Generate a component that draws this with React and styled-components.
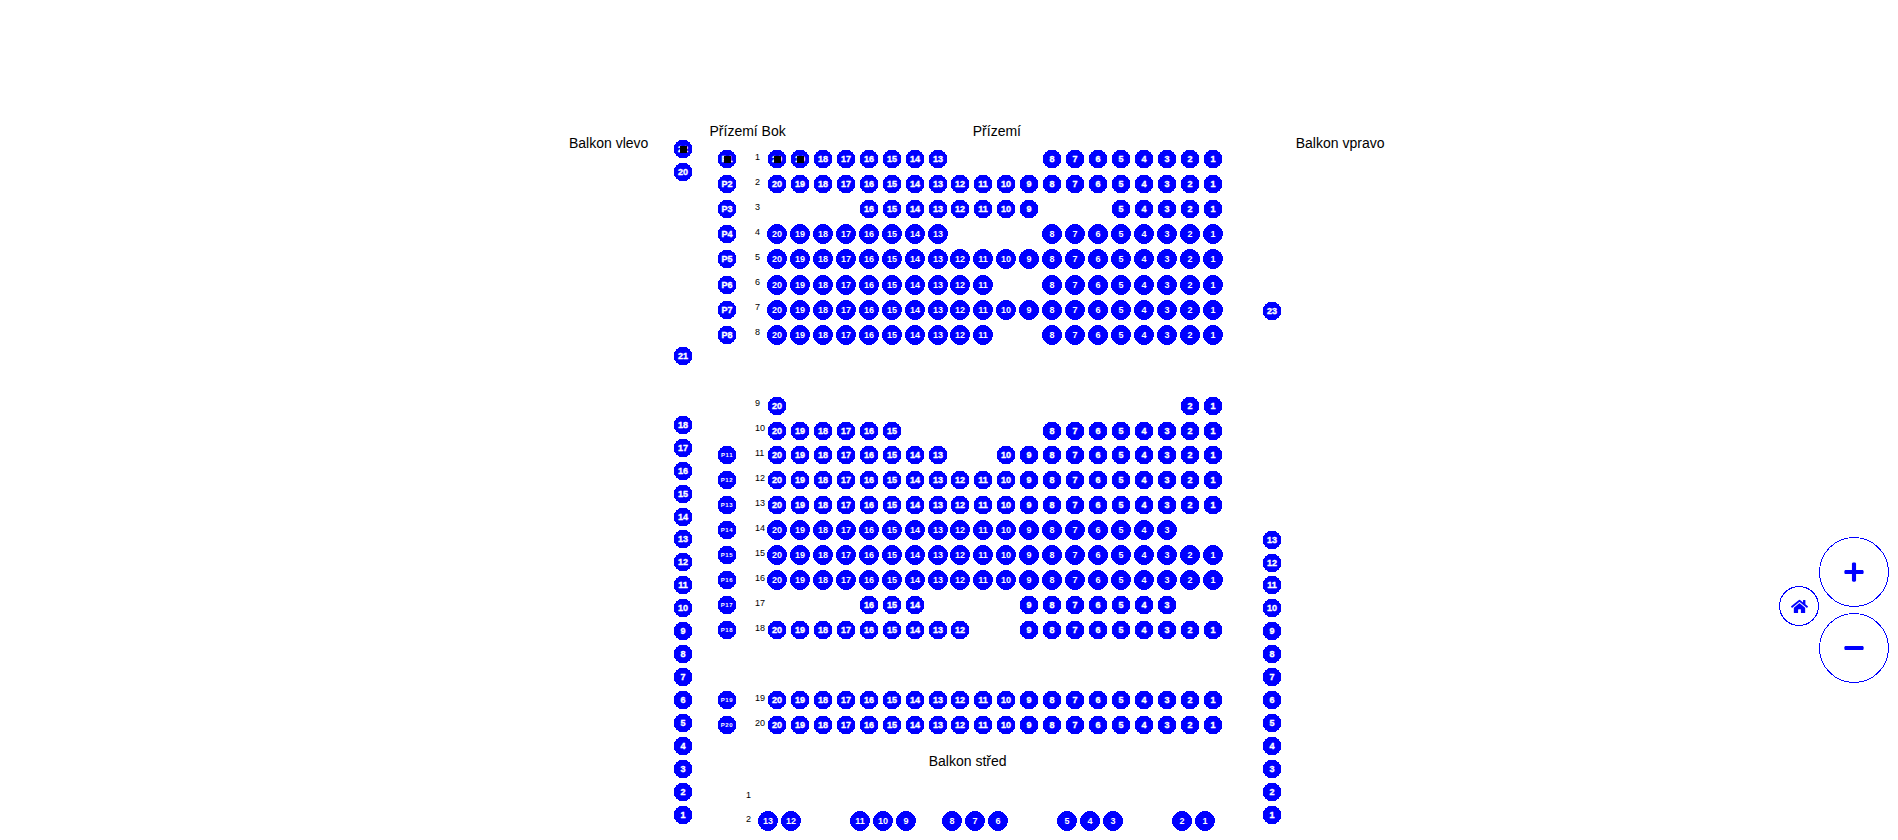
import React from 'react';
import styled, { createGlobalStyle } from 'styled-components';
import { FaHome, FaMinus, FaPlus } from 'react-icons/fa';

const BLUE = '#0000ff';

// seat ranges per row, always counted down from 20 to 1
const STALLS_TOP = [
  { row: 1, side: 'P1', ranges: [[20, 13], [8, 1]] },
  { row: 2, side: 'P2', ranges: [[20, 1]] },
  { row: 3, side: 'P3', ranges: [[16, 9], [5, 1]] },
  { row: 4, side: 'P4', ranges: [[20, 13], [8, 1]], large: true },
  { row: 5, side: 'P5', ranges: [[20, 1]], large: true },
  { row: 6, side: 'P6', ranges: [[20, 11], [8, 1]], large: true },
  { row: 7, side: 'P7', ranges: [[20, 1]], large: true },
  { row: 8, side: 'P8', ranges: [[20, 11], [8, 1]], large: true },
];

const STALLS_MIDDLE = [
  { row: 9, ranges: [[20, 20], [2, 1]] },
  { row: 10, ranges: [[20, 15], [8, 1]] },
  { row: 11, side: 'P11', ranges: [[20, 13], [10, 1]] },
  { row: 12, side: 'P12', ranges: [[20, 1]] },
  { row: 13, side: 'P13', ranges: [[20, 1]] },
  { row: 14, side: 'P14', ranges: [[20, 3]], large: true },
  { row: 15, side: 'P15', ranges: [[20, 1]], large: true },
  { row: 16, side: 'P16', ranges: [[20, 1]], large: true },
  { row: 17, side: 'P17', ranges: [[16, 14], [9, 3]] },
  { row: 18, side: 'P18', ranges: [[20, 12], [9, 1]] },
];

const STALLS_BOTTOM = [
  { row: 19, side: 'P19', ranges: [[20, 1]] },
  { row: 20, side: 'P20', ranges: [[20, 1]] },
];

const BALCONY_CENTER = [13, 12, null, null, 11, 10, 9, null, 8, 7, 6, null, null, 5, 4, 3, null, null, 2, 1];

const countDown = (from, to) => {
  const out = [];
  for (let i = from; i >= to; i--) out.push(i);
  return out;
};

const hasSeat = (ranges, n) => ranges.some(([from, to]) => n <= from && n >= to);

const GlobalStyle = createGlobalStyle`
  html, body {
    margin: 0;
    background: #fff;
    font-family: "Liberation Sans", Arial, sans-serif;
  }
`;

const Seat = ({ label, large, tiny, marked }) => (
  <SeatIcon viewBox="0 0 22 22">
    <SeatDisc cx="11" cy="11" r={large ? 10 : 9.4} />
    <SeatLabel x="11" y="11.4" $large={large} $tiny={tiny}>{label}</SeatLabel>
    {marked && <SeatMark x="7.5" y="7.5" width="7" height="7" />}
  </SeatIcon>
);

const SeatRow = ({ row, side, ranges, large, height, markedSeats = [] }) => (
  <Row $height={height}>
    <SideSlot>
      {side && <Seat label={side} tiny={side.length > 2} marked={side === 'P1'} />}
    </SideSlot>
    <RowNumber>{row}</RowNumber>
    {countDown(20, 1).map((n) => (
      <SeatSlot key={n}>
        {hasSeat(ranges, n) && <Seat label={n} large={large} marked={markedSeats.includes(n)} />}
      </SeatSlot>
    ))}
  </Row>
);

const ZoomButton = ({ size, children }) => (
  <RoundButton $size={size}>
    <Ring viewBox={`0 0 ${size} ${size}`}>
      <RingLine cx={size / 2} cy={size / 2} r={size / 2 - 0.5} />
    </Ring>
    {children}
  </RoundButton>
);

const App = () => (
  <>
    <GlobalStyle />
    <Page>
      <SeatMap>
        <LeftTitle>Balkon vlevo</LeftTitle>

        <LeftBalcony>
          <BalconySlot><Seat label={22} marked /></BalconySlot>
          <BalconySlot><Seat label={20} /></BalconySlot>
          <BalconySlot $gap={161}><Seat label={21} /></BalconySlot>
          <BalconySlot $gap={46}><Seat label={18} /></BalconySlot>
          {countDown(17, 1).map((n) => (
            <BalconySlot key={n}><Seat label={n} /></BalconySlot>
          ))}
        </LeftBalcony>

        <Stalls>
          <StallsTitles>
            <SideTitle>Přízemí Bok</SideTitle>
            <MainTitle>Přízemí</MainTitle>
          </StallsTitles>

          {STALLS_TOP.map((r) => (
            <SeatRow key={r.row} {...r} height={25.1} markedSeats={r.row === 1 ? [20, 19] : []} />
          ))}
          <RowBlock $gap={45.9}>
            {STALLS_MIDDLE.map((r) => <SeatRow key={r.row} {...r} height={24.92} />)}
          </RowBlock>
          <RowBlock $gap={45.1}>
            {STALLS_BOTTOM.map((r) => <SeatRow key={r.row} {...r} height={25} />)}
          </RowBlock>

          <CenterTitle>Balkon střed</CenterTitle>
          <CenterRow $height={23}>
            <CenterNumber>1</CenterNumber>
          </CenterRow>
          <CenterRow $height={25}>
            <CenterNumber>2</CenterNumber>
            {BALCONY_CENTER.map((n, i) => (
              <CenterSlot key={i}>{n && <Seat label={n} large />}</CenterSlot>
            ))}
          </CenterRow>
        </Stalls>

        <RightBalcony>
          <BalconySlot><Seat label={23} /></BalconySlot>
          <BalconySlot $gap={206}><Seat label={13} /></BalconySlot>
          {countDown(12, 1).map((n) => (
            <BalconySlot key={n}><Seat label={n} /></BalconySlot>
          ))}
        </RightBalcony>

        <RightTitle>Balkon vpravo</RightTitle>
      </SeatMap>

      <ZoomControls>
        <HomeWrap>
          <ZoomButton size={40}><FaHome size={17} /></ZoomButton>
        </HomeWrap>
        <ZoomStack>
          <ZoomButton size={70}><FaPlus size={22} /></ZoomButton>
          <ZoomButton size={70}><FaMinus size={22} /></ZoomButton>
        </ZoomStack>
      </ZoomControls>
    </Page>
  </>
);

export default App;

// Styled Components
const Page = styled.div`
  position: relative;
  width: 1898px;
  height: 840px;
  overflow: hidden;
  background: #fff;
`;

const SeatMap = styled.div`
  display: flex;
  align-items: flex-start;
  padding-left: 569px;
`;

const SectionTitle = styled.div`
  font-size: 14px;
  line-height: 16px;
  color: #000;
  white-space: nowrap;
`;

const LeftTitle = styled(SectionTitle)`
  width: 102.5px;
  margin-top: 135px;
`;

const RightTitle = styled(SectionTitle)`
  margin-top: 135px;
  margin-left: 12px;
`;

const LeftBalcony = styled.div`
  display: flex;
  flex-direction: column;
  width: 23px;
  margin-top: 137.5px;
`;

const RightBalcony = styled(LeftBalcony)`
  margin-top: 299.2px;
  margin-left: 36.5px;
`;

const BalconySlot = styled.div`
  display: flex;
  align-items: center;
  justify-content: center;
  height: 22.95px;
  margin-top: ${(p) => p.$gap || 0}px;
`;

const Stalls = styled.div`
  display: flex;
  flex-direction: column;
  margin-left: 21.5px;
  padding-top: 123px;
`;

const StallsTitles = styled.div`
  display: flex;
  height: 16px;
  margin-bottom: 7.5px;
`;

const SideTitle = styled(SectionTitle)`
  margin-left: -6.5px;
`;

const MainTitle = styled(SectionTitle)`
  margin-left: 187px;
`;

const CenterTitle = styled(SectionTitle)`
  margin-top: 16px;
  margin-bottom: 16px;
  padding-left: 212.7px;
`;

const RowBlock = styled.div`
  margin-top: ${(p) => p.$gap}px;
`;

const Row = styled.div`
  display: flex;
  align-items: center;
  height: ${(p) => p.$height}px;
`;

const SideSlot = styled.div`
  display: flex;
  align-items: center;
  justify-content: center;
  width: 23px;
  height: 25px;
  margin-left: -0.5px;
  margin-right: 16.5px;
`;

const RowNumber = styled.div`
  width: 10.5px;
  margin-bottom: 4.5px;
  font-size: 9px;
  line-height: 10px;
  color: #000;
`;

const SeatSlot = styled.div`
  display: flex;
  align-items: center;
  justify-content: center;
  width: 22.95px;
  height: 25px;
`;

const CenterRow = styled.div`
  display: flex;
  align-items: center;
  height: ${(p) => p.$height}px;
  padding-left: 30px;
`;

const CenterNumber = styled(RowNumber)`
  width: 10.8px;
`;

const CenterSlot = styled(SeatSlot)`
  width: 23px;
`;

const SeatIcon = styled.svg`
  display: block;
  flex: none;
  width: 22px;
  height: 22px;
`;

const SeatDisc = styled.circle`
  fill: ${BLUE};
  shape-rendering: crispEdges;
`;

const SeatLabel = styled.text`
  fill: #fff;
  font-family: "Liberation Sans", Arial, sans-serif;
  font-weight: 700;
  font-size: ${(p) => (p.$tiny ? 6 : 9)}px;
  letter-spacing: ${(p) => (p.$tiny ? 0.6 : 0)}px;
  text-anchor: middle;
  dominant-baseline: central;
  stroke: #fff;
  stroke-width: ${(p) => (p.$large || p.$tiny ? 0 : 0.35)}px;
`;

const SeatMark = styled.rect`
  fill: #000;
  shape-rendering: crispEdges;
`;

const ZoomControls = styled.div`
  position: absolute;
  top: 537px;
  right: 9px;
  display: flex;
  align-items: flex-start;
`;

const HomeWrap = styled.div`
  margin-top: 49px;
`;

const ZoomStack = styled.div`
  display: flex;
  flex-direction: column;
  gap: 5.5px;
`;

const RoundButton = styled.button`
  position: relative;
  display: flex;
  align-items: center;
  justify-content: center;
  width: ${(p) => p.$size}px;
  height: ${(p) => p.$size}px;
  padding: 0;
  border: none;
  background: transparent;
  color: ${BLUE};
  cursor: pointer;
`;

const Ring = styled.svg`
  position: absolute;
  inset: 0;
  width: 100%;
  height: 100%;
`;

const RingLine = styled.circle`
  fill: none;
  stroke: ${BLUE};
  stroke-width: 1px;
  shape-rendering: crispEdges;
`;
